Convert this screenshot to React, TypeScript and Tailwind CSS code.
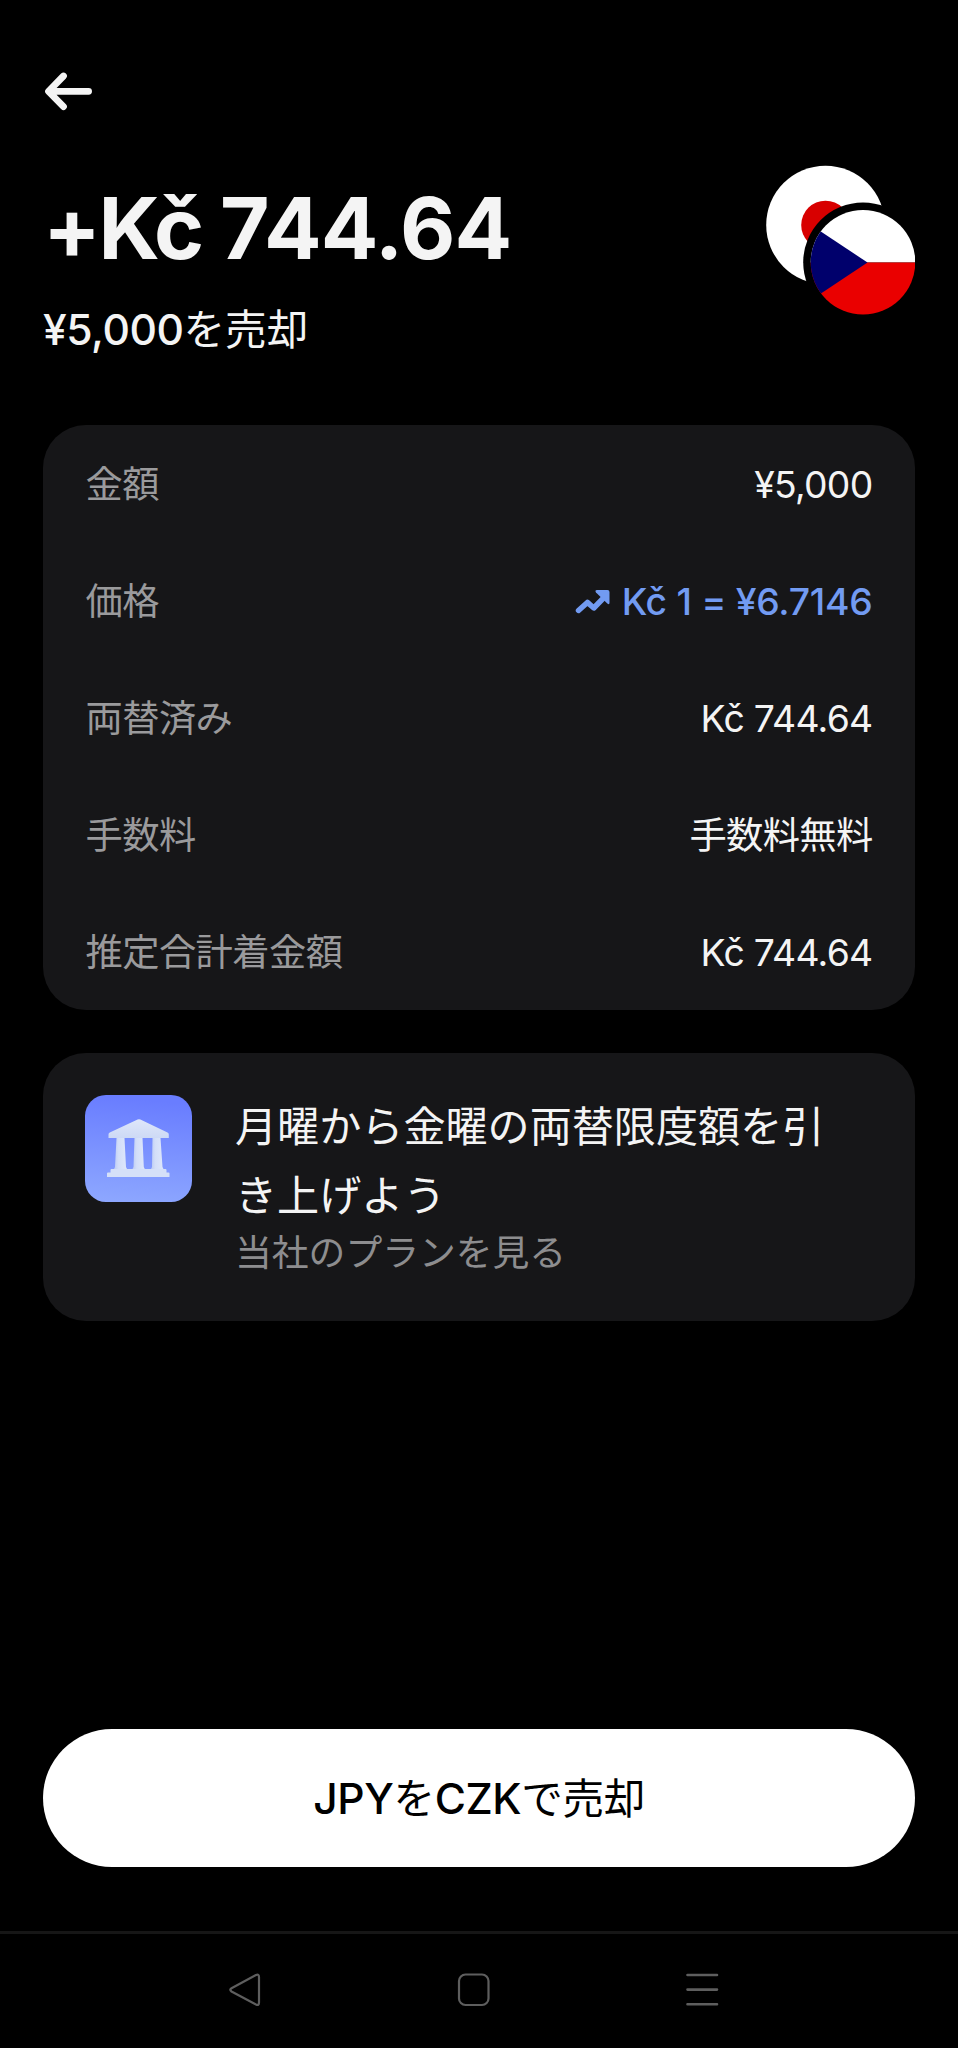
import React from "react";

const rows: { label: string; value: string; link?: boolean }[] = [
  { label: "金額", value: "¥5,000" },
  { label: "価格", value: "Kč 1 = ¥6.7146", link: true },
  { label: "両替済み", value: "Kč 744.64" },
  { label: "手数料", value: "手数料無料" },
  { label: "推定合計着金額", value: "Kč 744.64" },
];

function BackArrow() {
  return (
    <svg width="50" height="42" viewBox="0 0 50 42" fill="none" stroke="#f4f4f4" strokeWidth="6.8" strokeLinecap="round" strokeLinejoin="round">
      <path d="M20.5 6 5.5 21.300 20.500 36.600M6 21.300H45.600" />
    </svg>
  );
}

function TrendArrow() {
  return (
    <svg width="36" height="26" viewBox="0 0 36 26" className="shrink-0">
      <path d="M3.500 21.500 12.400 13.400 18.800 19 29 8.500" fill="none" stroke="#729bf2" strokeWidth="5.400" strokeLinecap="round" strokeLinejoin="round" />
      <path d="M22 1H32.500Q34.500 1 34.500 3V13.500Q34.500 16.500 32.300 14.500L21 3.600Q19.500 1.200 22 1Z" fill="#729bf2" />
    </svg>
  );
}

function FlagPair() {
  return (
    <svg width="150" height="150" viewBox="0 0 150 150" className="shrink-0">
      <defs>
        <clipPath id="czk">
          <circle cx="98" cy="97.300" r="52.300" />
        </clipPath>
      </defs>
      <circle cx="60.500" cy="60" r="59.300" fill="#fff" />
      <circle cx="60.500" cy="60" r="24.300" fill="#d80000" />
      <circle cx="98" cy="97.300" r="59.800" fill="#000" />
      <g clipPath="url(#czk)">
        <path d="M40 40H155V97.500H40Z" fill="#fff" />
        <path d="M40 97.500H155V155H40Z" fill="#ea0000" />
        <path d="M102.500 97.500 41.500 57V138Z" fill="#00006c" />
      </g>
    </svg>
  );
}

function BankIcon() {
  return (
    <svg width="107" height="107" viewBox="0 0 107 107" className="shrink-0">
      <defs>
        <linearGradient id="tile" x1="0.100" y1="0" x2="0" y2="1">
          <stop offset="0" stopColor="#697dff" />
          <stop offset="1" stopColor="#8ea8ff" />
        </linearGradient>
        <linearGradient id="col" x1="0" y1="0" x2="1" y2="0">
          <stop offset="0" stopColor="#b9c9f3" />
          <stop offset="0.350" stopColor="#d3def8" />
          <stop offset="1" stopColor="#dfe8fb" />
        </linearGradient>
        <linearGradient id="roof" x1="0" y1="0" x2="0" y2="1">
          <stop offset="0" stopColor="#dfe7fa" />
          <stop offset="1" stopColor="#cdd9f5" />
        </linearGradient>
      </defs>
      <rect width="107" height="107" rx="21" fill="url(#tile)" />
      <path d="M52.600 24.600Q54 23.800 55.400 24.600L82.500 37.500Q83.800 38.200 83.800 39.500V43H23.500V39.500Q23.500 38.200 24.800 37.500Z" fill="url(#roof)" />
      <path d="M31.500 43H39.500L41 72 42.500 75H28.500L30 72Z" fill="url(#col)" />
      <path d="M49.500 43H57.500L58.800 72 60.300 75H47L48.500 72Z" fill="url(#col)" />
      <path d="M67.500 43H75.500L77.500 72 79 75H65.500L67 72Z" fill="url(#col)" />
      <path d="M26.500 74H80.500Q81.500 74 81.500 75V77.500H83.500Q84.500 77.500 84.500 78.500V82H22V78.500Q22 77.500 23 77.500H25.500V75Q25.500 74 26.500 74Z" fill="#d5e0f8" />
    </svg>
  );
}

export default function App() {
  return (
    <div className="flex h-[2048px] w-[958px] flex-col bg-black font-['Inter','Noto_Sans_CJK_JP',sans-serif] text-[#f4f4f4]" lang="ja">
      <header className="flex h-[425px] flex-col px-[43px] pt-[70px]">
        <BackArrow />
        <div className="mt-[53px] flex items-start justify-between">
          <div className="pt-[11px]">
            <h1 className="text-[85.300px] leading-[104px] font-bold tracking-[-0.800px] whitespace-nowrap [word-spacing:-1.200px]">
              <span className="tracking-[-2.400px]">+Kč</span> 744.64
            </h1>
            <p className="mt-[20px] text-[42.600px] leading-[60px] font-medium tracking-[-0.450px] whitespace-nowrap">
              ¥5,000<span className="text-[41.600px] font-normal tracking-normal">を売却</span>
            </p>
          </div>
          <FlagPair />
        </div>
      </header>

      <main className="flex flex-1 flex-col px-[43px]">
        <dl className="rounded-[43px] bg-[#161618]">
          {rows.map((r) => (
            <div key={r.label} className="flex h-[117px] items-center justify-between px-[42.500px] pt-[2px] text-[37.300px] leading-[54px]">
              <dt className="tracking-[-0.600px] text-[#9a9a9c]">{r.label}</dt>
              {r.link ? (
                <dd className="flex items-center gap-[11px] font-medium tracking-[-0.250px] text-[#729bf2]">
                  <TrendArrow />
                  {r.value}
                </dd>
              ) : (
                <dd className="tracking-[-0.700px]">{r.value}</dd>
              )}
            </div>
          ))}
        </dl>

        <section className="mt-[43px] flex h-[268px] gap-[43px] rounded-[43px] bg-[#161618] px-[42px] pt-[42px]">
          <BankIcon />
          <div>
            <h2 className="-mt-[3px] w-[600px] text-[42.100px] leading-[69px]">月曜から金曜の両替限度額を引き上げよう</h2>
            <p className="-mt-[3px] text-[36.800px] leading-[52px] text-[#8d8d8f]">当社のプランを見る</p>
          </div>
        </section>

        <button className="mt-auto mb-[64px] flex h-[138px] items-center justify-center rounded-full bg-white pt-px text-[42.600px] font-medium text-black">
          <span className="tracking-[-0.400px]">
            JPY<span className="text-[41.600px] font-normal">を</span>CZK<span className="text-[41.600px] font-normal">で売却</span>
          </span>
        </button>
      </main>

      <nav className="flex h-[117px] justify-between border-t-3 border-[#161616] pt-[38px] pr-[239px] pl-[228px]">
        <svg width="34" height="36" viewBox="0 0 34 36" fill="none" stroke="#5e5e5e" strokeWidth="2.200" strokeLinejoin="round">
          <path d="M3.500 16.200 28 3Q31 1.600 31 5V30.500Q31 34 28 32.500L3.500 19.500Q1 17.800 3.500 16.200Z" />
        </svg>
        <svg width="34" height="36" viewBox="0 0 34 36" fill="none" stroke="#5e5e5e" strokeWidth="2.200">
          <rect x="2" y="2.500" width="29.500" height="30.500" rx="6.500" />
        </svg>
        <svg width="34" height="36" viewBox="0 0 34 36" fill="none" stroke="#5e5e5e" strokeWidth="2.600" strokeLinecap="round">
          <path d="M2.500 3H32M2.500 17.600H32M2.500 32.200H32" />
        </svg>
      </nav>
    </div>
  );
}
